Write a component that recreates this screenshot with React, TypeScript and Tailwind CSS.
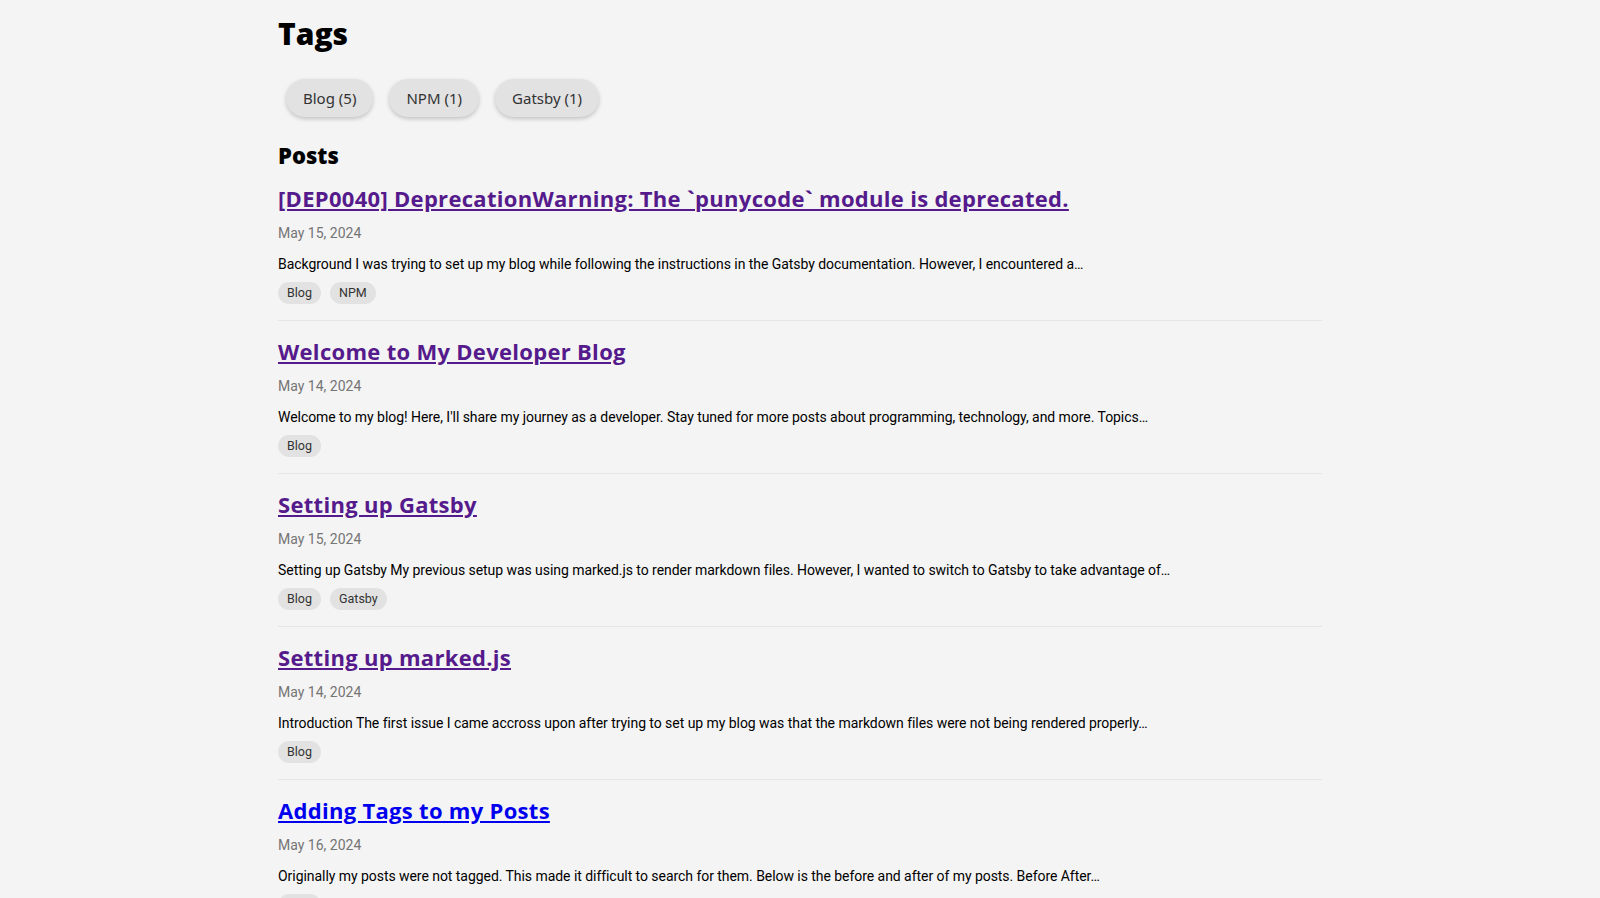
import React from "react";

interface Post {
  title: string;
  date: string;
  excerpt: string;
  tags: string[];
  visited: boolean;
}

const posts: Post[] = [
  {
    title: "[DEP0040] DeprecationWarning: The `punycode` module is deprecated.",
    date: "May 15, 2024",
    excerpt:
      "Background I was trying to set up my blog while following the instructions in the Gatsby documentation. However, I encountered a…",
    tags: ["Blog", "NPM"],
    visited: true,
  },
  {
    title: "Welcome to My Developer Blog",
    date: "May 14, 2024",
    excerpt:
      "Welcome to my blog! Here, I'll share my journey as a developer. Stay tuned for more posts about programming, technology, and more. Topics…",
    tags: ["Blog"],
    visited: true,
  },
  {
    title: "Setting up Gatsby",
    date: "May 15, 2024",
    excerpt:
      "Setting up Gatsby My previous setup was using marked.js to render markdown files. However, I wanted to switch to Gatsby to take advantage of…",
    tags: ["Blog", "Gatsby"],
    visited: true,
  },
  {
    title: "Setting up marked.js",
    date: "May 14, 2024",
    excerpt:
      "Introduction The first issue I came accross upon after trying to set up my blog was that the markdown files were not being rendered properly…",
    tags: ["Blog"],
    visited: true,
  },
  {
    title: "Adding Tags to my Posts",
    date: "May 16, 2024",
    excerpt:
      "Originally my posts were not tagged. This made it difficult to search for them. Below is the before and after of my posts. Before After…",
    tags: ["Blog"],
    visited: false,
  },
];

const tagCounts = [
  { name: "Blog", count: 5 },
  { name: "NPM", count: 1 },
  { name: "Gatsby", count: 1 },
];

function PostItem({ post }: { post: Post }) {
  return (
    <article className="pt-[15px] pb-[16px] border-b border-[#e6e6e6]">
      <a
        href="#"
        className={`block w-fit text-[22px] leading-[30px] font-bold tracking-[0.3px] underline underline-offset-2 font-['Open_Sans',sans-serif] ${
          post.visited ? "text-[#551a8b]" : "text-[#0000ee]"
        }`}
      >
        {post.title}
      </a>
      <p className="mt-[10px] text-[14px] leading-[20px] text-[#757575]">{post.date}</p>
      <p className="mt-[11px] text-[14px] leading-[20px] tracking-[-0.05px] text-black">
        {post.excerpt}
      </p>
      <div className="mt-[8px] flex gap-[9px]">
        {post.tags.map((t) => (
          <span
            key={t}
            className="h-[22px] px-[9px] rounded-full bg-[#e2e2e2] text-[12.5px] leading-[22px] text-[#333]"
          >
            {t}
          </span>
        ))}
      </div>
    </article>
  );
}

export default function App() {
  return (
    <div className="min-h-screen bg-[#f4f4f4] font-['Roboto',sans-serif]">
      <main className="mx-auto w-[1044px] pt-[14px]">
        <h1 className="text-[30px] leading-[40px] font-extrabold text-black font-['Open_Sans',sans-serif]">
          Tags
        </h1>
        <div className="mt-[25px] flex">
          {tagCounts.map((t) => (
            <button
              key={t.name}
              className="mx-[8px] h-[38px] px-[17px] rounded-full bg-[#e2e2e2] text-[15px] text-[#333] shadow-[0_2px_4px_rgba(0,0,0,0.2)] font-['Noto_Sans',sans-serif]"
            >
              {t.name} ({t.count})
            </button>
          ))}
        </div>
        <h2 className="mt-[24px] text-[22px] leading-[28px] font-extrabold text-black font-['Open_Sans',sans-serif]">
          Posts
        </h2>
        <div className="-mt-[1px]">
          {posts.map((p) => (
            <PostItem key={p.title} post={p} />
          ))}
        </div>
      </main>
    </div>
  );
}
